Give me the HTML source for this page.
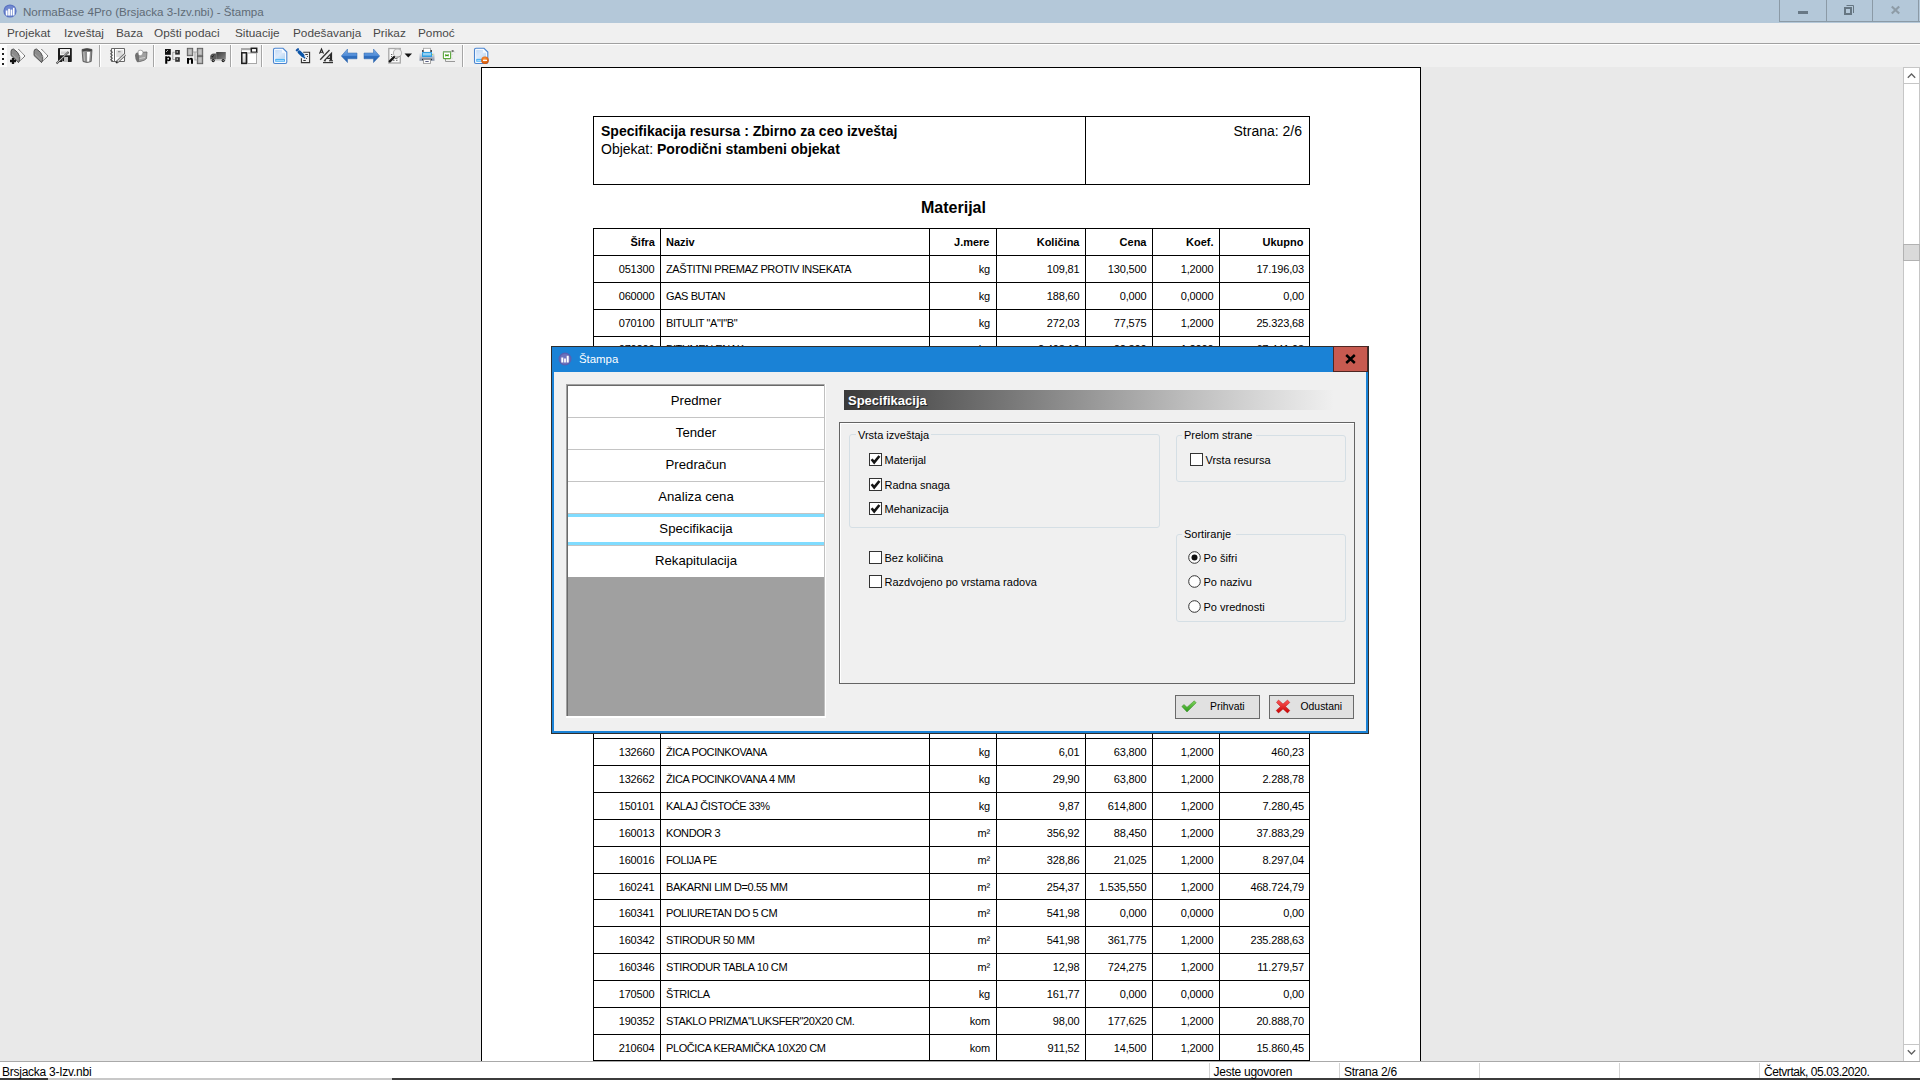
<!DOCTYPE html>
<html><head><meta charset="utf-8"><title>NormaBase 4Pro - Štampa</title>
<style>
html,body{margin:0;padding:0}
body{width:1920px;height:1080px;position:relative;overflow:hidden;background:#e9e9e9;font-family:"Liberation Sans", sans-serif}
.a{position:absolute}
.t{white-space:pre;line-height:1}
svg{overflow:visible}
</style></head><body>
<div class="a" style="left:0px;top:0px;width:1920px;height:23px;background:#b4c8d9"></div>
<svg class="a" style="left:3px;top:4px" width="15" height="15" viewBox="0 0 15 15"><circle cx="7" cy="7" r="6.6" fill="#5a73c2"/><circle cx="7" cy="7" r="5.4" fill="#7088cf"/><rect x="2.8" y="6.5" width="1.7" height="5" fill="#fff"/><rect x="5.2" y="4.8" width="1.7" height="6.7" fill="#fff"/><rect x="7.6" y="5.6" width="1.7" height="5.9" fill="#fff"/><rect x="10" y="3.8" width="1.5" height="7.7" fill="#fff"/></svg>
<div class="a t" style="left:23px;top:6.18px;font-size:11.6px;font-weight:400;color:#5f6b76;">NormaBase 4Pro (Brsjacka 3-Izv.nbi) - Štampa</div>
<div class="a" style="left:1779px;top:0px;width:141px;height:22px;background:#b4c8d9;border-left:1px solid #8b9aa6;border-bottom:1px solid #8b9aa6;box-sizing:border-box"></div>
<div class="a" style="left:1826px;top:0px;width:1px;height:22px;background:#8b9aa6"></div>
<div class="a" style="left:1872px;top:0px;width:1px;height:22px;background:#8b9aa6"></div>
<div class="a" style="left:1918px;top:0px;width:1px;height:22px;background:#8b9aa6"></div>
<div class="a" style="left:1798px;top:11px;width:10px;height:3px;background:#687885"></div>
<svg class="a" style="left:1840px;top:3px" width="16" height="14" viewBox="0 0 16 14"><rect x="5" y="5" width="6" height="6" fill="none" stroke="#667682" stroke-width="2"/><path d="M6.5 2.5 H13.5 V10" fill="none" stroke="#667682" stroke-width="1"/></svg>
<svg class="a" style="left:1891px;top:6px" width="9" height="8" viewBox="0 0 9 8"><path d="M0.8 0.5 L8.2 7.5 M8.2 0.5 L0.8 7.5" stroke="#8e9ca7" stroke-width="2.2"/></svg>
<div class="a" style="left:0px;top:23px;width:1920px;height:20px;background:#f0f0f0"></div>
<div class="a t" style="left:7px;top:27.51px;font-size:11.8px;font-weight:400;color:#484848;">Projekat</div>
<div class="a t" style="left:64px;top:27.51px;font-size:11.8px;font-weight:400;color:#484848;">Izveštaj</div>
<div class="a t" style="left:116px;top:27.51px;font-size:11.8px;font-weight:400;color:#484848;">Baza</div>
<div class="a t" style="left:154px;top:27.51px;font-size:11.8px;font-weight:400;color:#484848;">Opšti podaci</div>
<div class="a t" style="left:235px;top:27.51px;font-size:11.8px;font-weight:400;color:#484848;">Situacije</div>
<div class="a t" style="left:293px;top:27.51px;font-size:11.8px;font-weight:400;color:#484848;">Podešavanja</div>
<div class="a t" style="left:373px;top:27.51px;font-size:11.8px;font-weight:400;color:#484848;">Prikaz</div>
<div class="a t" style="left:418px;top:27.51px;font-size:11.8px;font-weight:400;color:#484848;">Pomoć</div>
<div class="a" style="left:0px;top:43px;width:1920px;height:1px;background:#a0a0a0"></div>
<div class="a" style="left:0px;top:44px;width:1920px;height:1px;background:#ffffff"></div>
<div class="a" style="left:0px;top:45px;width:1920px;height:22px;background:#f0f0f0"></div>
<div class="a" style="left:0px;top:45px;width:7px;height:22px;background:#fcfcfc"></div>
<div class="a" style="left:2px;top:48px;width:2px;height:2px;background:#222"></div>
<div class="a" style="left:2px;top:53px;width:2px;height:2px;background:#222"></div>
<div class="a" style="left:2px;top:58px;width:2px;height:2px;background:#222"></div>
<div class="a" style="left:2px;top:63px;width:2px;height:2px;background:#222"></div>
<div class="a" style="left:99px;top:45px;width:1px;height:22px;background:#a6a6a6"></div>
<div class="a" style="left:100px;top:45px;width:1px;height:22px;background:#ffffff"></div>
<div class="a" style="left:153px;top:45px;width:1px;height:22px;background:#a6a6a6"></div>
<div class="a" style="left:154px;top:45px;width:1px;height:22px;background:#ffffff"></div>
<div class="a" style="left:230px;top:45px;width:1px;height:22px;background:#a6a6a6"></div>
<div class="a" style="left:231px;top:45px;width:1px;height:22px;background:#ffffff"></div>
<div class="a" style="left:261px;top:45px;width:1px;height:22px;background:#a6a6a6"></div>
<div class="a" style="left:262px;top:45px;width:1px;height:22px;background:#ffffff"></div>
<div class="a" style="left:462px;top:45px;width:1px;height:22px;background:#a6a6a6"></div>
<div class="a" style="left:463px;top:45px;width:1px;height:22px;background:#ffffff"></div>
<svg class="a" style="left:8px;top:46px" width="20" height="20" viewBox="0 0 20 20"><path d="M5.5 3 L10.5 3 L17 10 L10.5 16.5 L3 9.5 L3 5.5 Z" fill="#fafafa"/><path d="M10.5 3.2 L17 10 L10.5 16.5" fill="none" stroke="#3c3c3c" stroke-width="1" stroke-dasharray="1 0.6"/><path d="M5.5 3 Q3 3 3 5.5 L3 9.5 L10.5 16.5 Q12.5 14 11.7 10.5 Q10.5 6 5.5 3 Z" fill="#8c8c8c" stroke="#4a4a4a" stroke-width="0.9"/><path d="M4 8 L10 13.5" stroke="#a6a6a6" stroke-width="1"/><path d="M11.7 10.5 Q13.5 12 14 12.5" stroke="#ddd" stroke-width="1"/><path d="M2 15 H8 M5 12 V18" stroke="#111" stroke-width="2.3"/></svg>
<svg class="a" style="left:31px;top:46px" width="20" height="20" viewBox="0 0 20 20"><path d="M5.5 3 L10.5 3 L17 10 L10.5 16.5 L3 9.5 L3 5.5 Z" fill="#fafafa"/><path d="M10.5 3.2 L17 10 L10.5 16.5" fill="none" stroke="#3c3c3c" stroke-width="1" stroke-dasharray="1 0.6"/><path d="M5.5 3 Q3 3 3 5.5 L3 9.5 L10.5 16.5 Q12.5 14 11.7 10.5 Q10.5 6 5.5 3 Z" fill="#8c8c8c" stroke="#4a4a4a" stroke-width="0.9"/><path d="M4 8 L10 13.5" stroke="#a6a6a6" stroke-width="1"/><path d="M11.7 10.5 Q13.5 12 14 12.5" stroke="#ddd" stroke-width="1"/></svg>
<svg class="a" style="left:54px;top:46px" width="20" height="20" viewBox="0 0 20 20"><rect x="4" y="2" width="13.8" height="14" rx="0.8" fill="#1c1c1c"/><rect x="6" y="3" width="10" height="6.3" fill="#efefef"/><rect x="7" y="5.5" width="8" height="2.5" fill="#d0d0d0"/><rect x="8" y="11" width="6" height="5" fill="#bdbdbd"/><rect x="8.4" y="12" width="1.6" height="3" fill="#111"/><path d="M2.5 17.5 L14.5 6" stroke="#444" stroke-width="1.8"/><path d="M2.8 17 L14.3 6.2" stroke="#d8d8d8" stroke-width="0.8"/></svg>
<svg class="a" style="left:78px;top:46px" width="20" height="20" viewBox="0 0 20 20"><path d="M4 3.5 Q9 1.5 14 3.5 L13.2 15.5 Q9 17.5 5 15.5 Z" fill="#8e8e8e" stroke="#505050" stroke-width="0.8"/><path d="M4.2 3.5 Q9 2 13.8 3.5 L13.6 5.5 Q9 4 4.4 5.5 Z" fill="#444"/><path d="M9 6 L12 6 L11.2 15.6 L9.2 15.8 Z" fill="#fff"/><path d="M5.8 6 L6.5 15" stroke="#b8b8b8" stroke-width="1.2"/></svg>
<svg class="a" style="left:108px;top:46px" width="20" height="20" viewBox="0 0 20 20"><rect x="3.5" y="2.5" width="13" height="13" rx="0.6" fill="#fff" stroke="#676767" stroke-width="1.1"/><path d="M6.5 2.5 V15.5" stroke="#676767" stroke-width="1"/><path d="M2 4.5 L5 6.5 M2 7.5 L5 9.5 M2 10.5 L5 12.5 M2 13.5 L5 15" stroke="#5a5a5a" stroke-width="1"/><rect x="8.2" y="4.2" width="6.6" height="7" fill="#dcdcdc"/><rect x="10" y="5.3" width="2.5" height="0.9" fill="#777"/><path d="M8.5 16.5 L17 8.5" stroke="#5c5c5c" stroke-width="3"/><path d="M8.5 16.5 L17 8.5" stroke="#e2e2e2" stroke-width="1.3"/><path d="M8 17 L9.5 15.5" stroke="#222" stroke-width="1.6"/></svg>
<svg class="a" style="left:131px;top:46px" width="20" height="20" viewBox="0 0 20 20"><path d="M7.5 6.5 L16 6 L15.5 12.5 Q14 14.5 9 15.5 L6.5 15.8 Z" fill="#a0a0a0" stroke="#666" stroke-width="0.8"/><path d="M4 9.5 Q4.5 6.5 6.5 6.5 L8 7 L8 15.8 L6 16 Q4 13 4 9.5 Z" fill="#707070"/><path d="M7 6 Q7 4 9.5 4.2 Q12 4 12 6.5 Q12 9.5 9 10 Q7 9.5 7 6 Z" fill="#fff" stroke="#8a8a8a" stroke-width="0.7"/><path d="M8.5 12.5 L14 11.5" stroke="#d0d0d0" stroke-width="1"/></svg>
<svg class="a" style="left:164px;top:48px" width="17" height="17" viewBox="0 0 17 17"><rect x="1" y="1" width="5.8" height="5.8" fill="#111"/><path d="M2 4 L4 2" stroke="#bbb" stroke-width="0.9"/><rect x="11.2" y="2" width="4.6" height="4.6" fill="#2a2a2a"/><rect x="12.6" y="3.3" width="1.3" height="1.3" fill="#ddd"/><rect x="11.2" y="9.2" width="4.6" height="4.6" fill="#333"/><rect x="12.6" y="10.4" width="1.3" height="1.3" fill="#ddd"/><path d="M10.8 4.3 H8.8 V11.5 H10.8" fill="none" stroke="#999" stroke-width="0.9"/><path d="M1.2 8.3 H3.2 V8.9 Q3.8 8.2 4.6 8.2 Q7 8.2 7 10.7 Q7 13.2 4.6 13.2 Q3.8 13.2 3.3 12.6 V15.8 H1.2 Z M3.3 10.7 Q3.3 11.7 4.2 11.7 Q5 11.7 5 10.7 Q5 9.7 4.2 9.7 Q3.3 9.7 3.3 10.7 Z" fill="#000" fill-rule="evenodd"/></svg>
<svg class="a" style="left:186px;top:47px" width="18" height="18" viewBox="0 0 18 18"><rect x="1.3" y="1.3" width="5.4" height="7.4" fill="#a2a2a2" stroke="#5a5a5a" stroke-width="0.9"/><rect x="2.5" y="2.5" width="3" height="5" fill="#c4c4c4"/><rect x="11.3" y="1.3" width="5.4" height="7.6" fill="#a2a2a2" stroke="#5a5a5a" stroke-width="0.9"/><rect x="12.5" y="2.5" width="3" height="5" fill="#c4c4c4"/><rect x="11.3" y="9.3" width="5.4" height="7.4" fill="#a2a2a2" stroke="#5a5a5a" stroke-width="0.9"/><rect x="12.5" y="10.5" width="3" height="5" fill="#c4c4c4"/><path d="M6.8 5 H9 V13 H11.3 M9 5 H11.3" fill="none" stroke="#a8a8a8" stroke-width="1.2"/><path d="M1 11 H3 V11.8 Q4 10.8 5.2 10.8 Q7 10.8 7 13 V16.8 H5 V13.5 Q5 12.6 4.2 12.6 Q3 12.6 3 13.8 V16.8 H1 Z" fill="#000"/></svg>
<svg class="a" style="left:209px;top:51px" width="18" height="12" viewBox="0 0 18 12"><defs><linearGradient id="tg" x1="0" y1="0" x2="1" y2="1"><stop offset="0" stop-color="#3a3a3a"/><stop offset="1" stop-color="#8a8a8a"/></linearGradient></defs><rect x="7.2" y="1" width="9.6" height="7.6" fill="url(#tg)"/><path d="M1.2 8.8 V5.5 Q1.5 3 4.5 2.6 L7.2 2.6 L7.2 9 Z" fill="#5c5c5c"/><path d="M2.2 5.2 Q3.2 3.4 5.6 3.3 L3.6 6.5 Z" fill="#111"/><path d="M2.8 5.2 L4.6 3.8" stroke="#aaa" stroke-width="0.6"/><rect x="1" y="8.3" width="16" height="1.4" fill="#c8c8c8"/><circle cx="4.2" cy="9.6" r="1.6" fill="#1a1a1a"/><circle cx="4.2" cy="9.6" r="0.6" fill="#bbb"/><circle cx="14.2" cy="9.6" r="1.6" fill="#1a1a1a"/><circle cx="14.2" cy="9.6" r="0.6" fill="#bbb"/></svg>
<svg class="a" style="left:240px;top:47px" width="18" height="18" viewBox="0 0 18 18"><rect x="1.5" y="1.5" width="15" height="15" fill="#fff" stroke="#a0a0a0" stroke-width="1"/><rect x="1" y="1" width="16" height="2.2" fill="#a8a8a8"/><rect x="11.3" y="1.3" width="5.4" height="4" fill="#fff" stroke="#1e1e1e" stroke-width="1.5"/><defs><linearGradient id="lg" x1="0" y1="0" x2="0" y2="1"><stop offset="0" stop-color="#fff"/><stop offset="1" stop-color="#c8c8c8"/></linearGradient></defs><rect x="1.8" y="5.8" width="4.6" height="10.6" fill="url(#lg)" stroke="#1e1e1e" stroke-width="1.5"/><rect x="7.5" y="6" width="9" height="10.5" fill="#fff" stroke="#a8a8a8" stroke-width="1"/></svg>
<svg class="a" style="left:270px;top:46px" width="20" height="20" viewBox="0 0 20 20"><defs><linearGradient id="pg1" x1="0" y1="0" x2="1" y2="1"><stop offset="0" stop-color="#c3dbf6"/><stop offset="0.5" stop-color="#dbe9fb"/><stop offset="1" stop-color="#b8d6f2"/></linearGradient></defs><path d="M5 2.3 H13 L16.8 6 V16 Q16.8 17.5 15.3 17.5 H5 Q3.5 17.5 3.5 16 V3.8 Q3.5 2.3 5 2.3 Z" fill="#f6faff" stroke="#4a84cf" stroke-width="1.1"/><path d="M5.2 4 H12 V6.8 H15 V12.5 H5.2 Z" fill="url(#pg1)"/><rect x="5.2" y="12.8" width="9.8" height="3" rx="0.4" fill="#4fb2f4"/><rect x="6.2" y="14" width="7.8" height="0.9" fill="#a9dcff"/></svg>
<svg class="a" style="left:294px;top:46px" width="20" height="20" viewBox="0 0 20 20"><path d="M9.2 6.3 H15.6 V16.6 H7.4 V12.2" fill="none" stroke="#333" stroke-width="1.1"/><path d="M11.3 8.5 H13.8 M9.3 14.5 H11.8" stroke="#333" stroke-width="1"/><circle cx="13.5" cy="10.5" r="0.6" fill="#333"/><circle cx="12.5" cy="12.5" r="0.6" fill="#333"/><path d="M2.8 4.3 L4 3.2" stroke="#1556a8" stroke-width="2.2" stroke-linecap="round"/><path d="M5.2 6 L8.8 9.5" stroke="#0b55a8" stroke-width="3.4" stroke-linecap="round"/><path d="M9.8 11 L10.6 11.8" stroke="#0b55a8" stroke-width="1.6" stroke-linecap="round"/></svg>
<svg class="a" style="left:316px;top:46px" width="20" height="20" viewBox="0 0 20 20"><path d="M3.5 7.6 L5.5 3 L7.5 7.6 M4.3 6.3 H6.7" fill="none" stroke="#222" stroke-width="1.1"/><path d="M4.2 13.8 L13.5 4" stroke="#333" stroke-width="1.3"/><path d="M8.3 14.6 L15.5 7.2 L15.5 14.6 M11.3 12.3 H15" fill="none" stroke="#2a2a2a" stroke-width="1.2"/><path d="M14.6 8.5 L14.6 14.6" stroke="#2a2a2a" stroke-width="1.6"/><path d="M7.8 14.8 H10 M13 14.8 H17" stroke="#2a2a2a" stroke-width="1"/><path d="M7 16.6 H17" stroke="#333" stroke-width="1.2"/></svg>
<svg class="a" style="left:339px;top:46px" width="20" height="20" viewBox="0 0 20 20"><defs><linearGradient id="la" x1="0" y1="0" x2="0" y2="1"><stop offset="0" stop-color="#7eaee6"/><stop offset="0.5" stop-color="#4d8ad6"/><stop offset="0.55" stop-color="#2f6fc0"/><stop offset="1" stop-color="#2660aa"/></linearGradient></defs><g><path d="M2.3 10 L8.5 3 V7 H18 V12.8 H8.5 V16.6 Z" fill="url(#la)" stroke="#2a64ae" stroke-width="0.5"/></g></svg>
<svg class="a" style="left:362px;top:46px" width="20" height="20" viewBox="0 0 20 20"><defs><linearGradient id="ra" x1="0" y1="0" x2="0" y2="1"><stop offset="0" stop-color="#7eaee6"/><stop offset="0.5" stop-color="#4d8ad6"/><stop offset="0.55" stop-color="#2f6fc0"/><stop offset="1" stop-color="#2660aa"/></linearGradient></defs><g transform="translate(20,0) scale(-1,1)"><path d="M2.3 10 L8.5 3 V7 H18 V12.8 H8.5 V16.6 Z" fill="url(#ra)" stroke="#2a64ae" stroke-width="0.5"/></g></svg>
<svg class="a" style="left:386px;top:46px" width="20" height="20" viewBox="0 0 20 20"><rect x="2.8" y="2.5" width="11.5" height="14.5" fill="#fafafa" stroke="#a8a8a8" stroke-width="1.3"/><path d="M5 8.5 H6.3 M5 10.5 H6 M9 12.4 H11.5 M7 14.3 H8.5 M10 14.3 H11.5" stroke="#555" stroke-width="0.9"/><circle cx="11.5" cy="7" r="4.1" fill="#ececec" stroke="#b8b8b8" stroke-width="1.1"/><path d="M14.5 9.8 Q13 11.4 10.5 11.3" fill="none" stroke="#888" stroke-width="0.8"/><path d="M3.8 15.3 L8 11.2" stroke="#1a1a1a" stroke-width="2.4" stroke-linecap="round"/></svg>
<svg class="a" style="left:404px;top:53px" width="9" height="5" viewBox="0 0 9 5"><path d="M0.5 0.5 H8 L4.25 4.5 Z" fill="#111"/></svg>
<svg class="a" style="left:417px;top:46px" width="20" height="20" viewBox="0 0 20 20"><defs><linearGradient id="prb" x1="0" y1="0" x2="0" y2="1"><stop offset="0" stop-color="#f2f4f8"/><stop offset="1" stop-color="#8390a6"/></linearGradient></defs><path d="M2.5 8 Q2.5 6 4.5 6 H15.5 Q17.5 6 17.5 8 V14.8 H2.5 Z" fill="url(#prb)"/><rect x="6.5" y="2.3" width="7" height="4" fill="#fff" stroke="#a8a8a8" stroke-width="0.9"/><rect x="5.2" y="4" width="1.2" height="2" fill="#1a2330"/><rect x="13.6" y="4" width="1.2" height="2" fill="#1a2330"/><rect x="5" y="6" width="10" height="5" rx="0.6" fill="#2e9ee0"/><rect x="6" y="7" width="8" height="2.5" fill="#93d0f3"/><circle cx="15.7" cy="8.5" r="0.6" fill="#b8e02a"/><rect x="5" y="12.8" width="10" height="1.4" fill="#2a3340"/><rect x="6.5" y="13.6" width="7" height="3.8" fill="#fff" stroke="#9a9a9a" stroke-width="0.9"/><rect x="8.3" y="15.1" width="3.4" height="0.9" fill="#4a5078"/></svg>
<svg class="a" style="left:440px;top:46px" width="20" height="20" viewBox="0 0 20 20"><path d="M5.5 12.8 V15.5 H15" fill="none" stroke="#999" stroke-width="1"/><rect x="3.4" y="5.6" width="7.2" height="7" rx="0.5" fill="#fff" stroke="#5aa83a" stroke-width="1.1"/><rect x="3.2" y="5.3" width="7.6" height="1.2" fill="#9ab59a"/><path d="M5.2 8 Q7 9.3 8.7 8 L8.7 10.5 Q7 9.3 5.2 10.5 Z" fill="#3a9a10"/><path d="M12 4.5 H13 Q13.6 4.5 13.6 5 Q13.6 5.5 13 5.5 H12 M12 4.3 V6.2 M14 5.6 L14.6 6.2" fill="none" stroke="#666" stroke-width="0.8"/><path d="M11.5 8.5 H12.8 M11.5 12.3 H12.8" stroke="#ccc" stroke-width="0.7"/></svg>
<svg class="a" style="left:471px;top:46px" width="20" height="20" viewBox="0 0 20 20"><defs><linearGradient id="pg2" x1="0" y1="0" x2="1" y2="1"><stop offset="0" stop-color="#c3dbf6"/><stop offset="0.5" stop-color="#dbe9fb"/><stop offset="1" stop-color="#b8d6f2"/></linearGradient></defs><path d="M5 2.3 H13 L16.8 6 V16 Q16.8 17.5 15.3 17.5 H5 Q3.5 17.5 3.5 16 V3.8 Q3.5 2.3 5 2.3 Z" fill="#f6faff" stroke="#4a84cf" stroke-width="1.1"/><path d="M5.2 4 H12 V6.8 H15 V12.5 H5.2 Z" fill="url(#pg2)"/><rect x="5.2" y="12.8" width="9.8" height="3" rx="0.4" fill="#4fb2f4"/><rect x="6.2" y="14" width="7.8" height="0.9" fill="#a9dcff"/><defs><radialGradient id="og" cx="0.45" cy="0.35" r="0.7"><stop offset="0" stop-color="#ff9a40"/><stop offset="1" stop-color="#c84800"/></radialGradient></defs><circle cx="14" cy="14.3" r="3.8" fill="url(#og)"/><rect x="12" y="13.7" width="4" height="1.3" fill="#fff"/></svg>
<div class="a" style="left:0px;top:67px;width:1903px;height:994px;background:#e9e9e9"></div>
<div class="a" style="left:481px;top:67px;width:940px;height:994px;background:#fff;border:1px solid #000;border-bottom:none;box-sizing:border-box"></div>
<div class="a" style="left:593px;top:116px;width:717px;height:69px;border:1px solid #000;box-sizing:border-box"></div>
<div class="a" style="left:1085px;top:116px;width:1px;height:69px;background:#000"></div>
<div class="a t" style="left:601px;top:124.15px;font-size:14px;font-weight:700;color:#000;">Specifikacija resursa : Zbirno za ceo izveštaj</div>
<div class="a t" style="left:601px;top:142.15px;font-size:14px;font-weight:400;color:#000;">Objekat:</div>
<div class="a t" style="left:657px;top:142.15px;font-size:14px;font-weight:700;color:#000;">Porodični stambeni objekat</div>
<div class="a t" style="left:902px;width:400px;text-align:right;top:124.15px;font-size:14px;font-weight:400;color:#000;">Strana: 2/6</div>
<div class="a t" style="left:921px;top:200.46px;font-size:16px;font-weight:700;color:#000;">Materijal</div>
<div class="a" style="left:593px;top:228px;width:1px;height:833px;background:#000"></div>
<div class="a" style="left:660px;top:228px;width:1px;height:833px;background:#000"></div>
<div class="a" style="left:929px;top:228px;width:1px;height:833px;background:#000"></div>
<div class="a" style="left:996px;top:228px;width:1px;height:833px;background:#000"></div>
<div class="a" style="left:1085px;top:228px;width:1px;height:833px;background:#000"></div>
<div class="a" style="left:1152px;top:228px;width:1px;height:833px;background:#000"></div>
<div class="a" style="left:1219px;top:228px;width:1px;height:833px;background:#000"></div>
<div class="a" style="left:1309px;top:228px;width:1px;height:833px;background:#000"></div>
<div class="a" style="left:593px;top:228px;width:717px;height:1px;background:#000"></div>
<div class="a" style="left:593px;top:255px;width:717px;height:1px;background:#000"></div>
<div class="a" style="left:593px;top:282px;width:717px;height:1px;background:#000"></div>
<div class="a" style="left:593px;top:309px;width:717px;height:1px;background:#000"></div>
<div class="a" style="left:593px;top:336px;width:717px;height:1px;background:#000"></div>
<div class="a" style="left:593px;top:363px;width:717px;height:1px;background:#000"></div>
<div class="a" style="left:593px;top:389px;width:717px;height:1px;background:#000"></div>
<div class="a" style="left:593px;top:416px;width:717px;height:1px;background:#000"></div>
<div class="a" style="left:593px;top:443px;width:717px;height:1px;background:#000"></div>
<div class="a" style="left:593px;top:470px;width:717px;height:1px;background:#000"></div>
<div class="a" style="left:593px;top:497px;width:717px;height:1px;background:#000"></div>
<div class="a" style="left:593px;top:524px;width:717px;height:1px;background:#000"></div>
<div class="a" style="left:593px;top:550px;width:717px;height:1px;background:#000"></div>
<div class="a" style="left:593px;top:577px;width:717px;height:1px;background:#000"></div>
<div class="a" style="left:593px;top:604px;width:717px;height:1px;background:#000"></div>
<div class="a" style="left:593px;top:631px;width:717px;height:1px;background:#000"></div>
<div class="a" style="left:593px;top:658px;width:717px;height:1px;background:#000"></div>
<div class="a" style="left:593px;top:685px;width:717px;height:1px;background:#000"></div>
<div class="a" style="left:593px;top:711px;width:717px;height:1px;background:#000"></div>
<div class="a" style="left:593px;top:738px;width:717px;height:1px;background:#000"></div>
<div class="a" style="left:593px;top:765px;width:717px;height:1px;background:#000"></div>
<div class="a" style="left:593px;top:792px;width:717px;height:1px;background:#000"></div>
<div class="a" style="left:593px;top:819px;width:717px;height:1px;background:#000"></div>
<div class="a" style="left:593px;top:846px;width:717px;height:1px;background:#000"></div>
<div class="a" style="left:593px;top:873px;width:717px;height:1px;background:#000"></div>
<div class="a" style="left:593px;top:899px;width:717px;height:1px;background:#000"></div>
<div class="a" style="left:593px;top:926px;width:717px;height:1px;background:#000"></div>
<div class="a" style="left:593px;top:953px;width:717px;height:1px;background:#000"></div>
<div class="a" style="left:593px;top:980px;width:717px;height:1px;background:#000"></div>
<div class="a" style="left:593px;top:1007px;width:717px;height:1px;background:#000"></div>
<div class="a" style="left:593px;top:1034px;width:717px;height:1px;background:#000"></div>
<div class="a" style="left:593px;top:1060px;width:717px;height:1px;background:#000"></div>
<div class="a t" style="left:455px;width:200px;text-align:right;top:236.69px;font-size:11px;font-weight:700;color:#000;">Šifra</div>
<div class="a t" style="left:666px;top:236.69px;font-size:11px;font-weight:700;color:#000;">Naziv</div>
<div class="a t" style="left:789.5px;width:200px;text-align:right;top:236.69px;font-size:11px;font-weight:700;color:#000;">J.mere</div>
<div class="a t" style="left:879.5px;width:200px;text-align:right;top:236.69px;font-size:11px;font-weight:700;color:#000;">Količina</div>
<div class="a t" style="left:946.5px;width:200px;text-align:right;top:236.69px;font-size:11px;font-weight:700;color:#000;">Cena</div>
<div class="a t" style="left:1013.5px;width:200px;text-align:right;top:236.69px;font-size:11px;font-weight:700;color:#000;">Koef.</div>
<div class="a t" style="left:1103.5px;width:200px;text-align:right;top:236.69px;font-size:11px;font-weight:700;color:#000;">Ukupno</div>
<div class="a t" style="left:454.5px;width:200px;text-align:right;top:263.69px;font-size:11px;font-weight:400;color:#000;letter-spacing:-0.15px;">051300</div>
<div class="a t" style="left:666px;top:263.69px;font-size:11px;font-weight:400;color:#000;letter-spacing:-0.4px;">ZAŠTITNI PREMAZ PROTIV INSEKATA</div>
<div class="a t" style="left:790px;width:200px;text-align:right;top:263.69px;font-size:11px;font-weight:400;color:#000;letter-spacing:-0.15px;">kg</div>
<div class="a t" style="left:879.5px;width:200px;text-align:right;top:263.69px;font-size:11px;font-weight:400;color:#000;letter-spacing:-0.15px;">109,81</div>
<div class="a t" style="left:946.5px;width:200px;text-align:right;top:263.69px;font-size:11px;font-weight:400;color:#000;letter-spacing:-0.15px;">130,500</div>
<div class="a t" style="left:1013.5px;width:200px;text-align:right;top:263.69px;font-size:11px;font-weight:400;color:#000;letter-spacing:-0.15px;">1,2000</div>
<div class="a t" style="left:1104px;width:200px;text-align:right;top:263.69px;font-size:11px;font-weight:400;color:#000;letter-spacing:-0.15px;">17.196,03</div>
<div class="a t" style="left:454.5px;width:200px;text-align:right;top:290.69px;font-size:11px;font-weight:400;color:#000;letter-spacing:-0.15px;">060000</div>
<div class="a t" style="left:666px;top:290.69px;font-size:11px;font-weight:400;color:#000;letter-spacing:-0.4px;">GAS BUTAN</div>
<div class="a t" style="left:790px;width:200px;text-align:right;top:290.69px;font-size:11px;font-weight:400;color:#000;letter-spacing:-0.15px;">kg</div>
<div class="a t" style="left:879.5px;width:200px;text-align:right;top:290.69px;font-size:11px;font-weight:400;color:#000;letter-spacing:-0.15px;">188,60</div>
<div class="a t" style="left:946.5px;width:200px;text-align:right;top:290.69px;font-size:11px;font-weight:400;color:#000;letter-spacing:-0.15px;">0,000</div>
<div class="a t" style="left:1013.5px;width:200px;text-align:right;top:290.69px;font-size:11px;font-weight:400;color:#000;letter-spacing:-0.15px;">0,0000</div>
<div class="a t" style="left:1104px;width:200px;text-align:right;top:290.69px;font-size:11px;font-weight:400;color:#000;letter-spacing:-0.15px;">0,00</div>
<div class="a t" style="left:454.5px;width:200px;text-align:right;top:317.69px;font-size:11px;font-weight:400;color:#000;letter-spacing:-0.15px;">070100</div>
<div class="a t" style="left:666px;top:317.69px;font-size:11px;font-weight:400;color:#000;letter-spacing:-0.4px;">BITULIT "A"I"B"</div>
<div class="a t" style="left:790px;width:200px;text-align:right;top:317.69px;font-size:11px;font-weight:400;color:#000;letter-spacing:-0.15px;">kg</div>
<div class="a t" style="left:879.5px;width:200px;text-align:right;top:317.69px;font-size:11px;font-weight:400;color:#000;letter-spacing:-0.15px;">272,03</div>
<div class="a t" style="left:946.5px;width:200px;text-align:right;top:317.69px;font-size:11px;font-weight:400;color:#000;letter-spacing:-0.15px;">77,575</div>
<div class="a t" style="left:1013.5px;width:200px;text-align:right;top:317.69px;font-size:11px;font-weight:400;color:#000;letter-spacing:-0.15px;">1,2000</div>
<div class="a t" style="left:1104px;width:200px;text-align:right;top:317.69px;font-size:11px;font-weight:400;color:#000;letter-spacing:-0.15px;">25.323,68</div>
<div class="a t" style="left:454.5px;width:200px;text-align:right;top:343.69px;font-size:11px;font-weight:400;color:#000;letter-spacing:-0.15px;">070200</div>
<div class="a t" style="left:666px;top:343.69px;font-size:11px;font-weight:400;color:#000;letter-spacing:-0.4px;">BITUMEN ENAK</div>
<div class="a t" style="left:790px;width:200px;text-align:right;top:343.69px;font-size:11px;font-weight:400;color:#000;letter-spacing:-0.15px;">kg</div>
<div class="a t" style="left:879.5px;width:200px;text-align:right;top:343.69px;font-size:11px;font-weight:400;color:#000;letter-spacing:-0.15px;">2.498,12</div>
<div class="a t" style="left:946.5px;width:200px;text-align:right;top:343.69px;font-size:11px;font-weight:400;color:#000;letter-spacing:-0.15px;">22,300</div>
<div class="a t" style="left:1013.5px;width:200px;text-align:right;top:343.69px;font-size:11px;font-weight:400;color:#000;letter-spacing:-0.15px;">1,2000</div>
<div class="a t" style="left:1104px;width:200px;text-align:right;top:343.69px;font-size:11px;font-weight:400;color:#000;letter-spacing:-0.15px;">67.441,93</div>
<div class="a t" style="left:454.5px;width:200px;text-align:right;top:746.69px;font-size:11px;font-weight:400;color:#000;letter-spacing:-0.15px;">132660</div>
<div class="a t" style="left:666px;top:746.69px;font-size:11px;font-weight:400;color:#000;letter-spacing:-0.4px;">ŽICA POCINKOVANA</div>
<div class="a t" style="left:790px;width:200px;text-align:right;top:746.69px;font-size:11px;font-weight:400;color:#000;letter-spacing:-0.15px;">kg</div>
<div class="a t" style="left:879.5px;width:200px;text-align:right;top:746.69px;font-size:11px;font-weight:400;color:#000;letter-spacing:-0.15px;">6,01</div>
<div class="a t" style="left:946.5px;width:200px;text-align:right;top:746.69px;font-size:11px;font-weight:400;color:#000;letter-spacing:-0.15px;">63,800</div>
<div class="a t" style="left:1013.5px;width:200px;text-align:right;top:746.69px;font-size:11px;font-weight:400;color:#000;letter-spacing:-0.15px;">1,2000</div>
<div class="a t" style="left:1104px;width:200px;text-align:right;top:746.69px;font-size:11px;font-weight:400;color:#000;letter-spacing:-0.15px;">460,23</div>
<div class="a t" style="left:454.5px;width:200px;text-align:right;top:773.69px;font-size:11px;font-weight:400;color:#000;letter-spacing:-0.15px;">132662</div>
<div class="a t" style="left:666px;top:773.69px;font-size:11px;font-weight:400;color:#000;letter-spacing:-0.4px;">ŽICA POCINKOVANA 4 MM</div>
<div class="a t" style="left:790px;width:200px;text-align:right;top:773.69px;font-size:11px;font-weight:400;color:#000;letter-spacing:-0.15px;">kg</div>
<div class="a t" style="left:879.5px;width:200px;text-align:right;top:773.69px;font-size:11px;font-weight:400;color:#000;letter-spacing:-0.15px;">29,90</div>
<div class="a t" style="left:946.5px;width:200px;text-align:right;top:773.69px;font-size:11px;font-weight:400;color:#000;letter-spacing:-0.15px;">63,800</div>
<div class="a t" style="left:1013.5px;width:200px;text-align:right;top:773.69px;font-size:11px;font-weight:400;color:#000;letter-spacing:-0.15px;">1,2000</div>
<div class="a t" style="left:1104px;width:200px;text-align:right;top:773.69px;font-size:11px;font-weight:400;color:#000;letter-spacing:-0.15px;">2.288,78</div>
<div class="a t" style="left:454.5px;width:200px;text-align:right;top:800.69px;font-size:11px;font-weight:400;color:#000;letter-spacing:-0.15px;">150101</div>
<div class="a t" style="left:666px;top:800.69px;font-size:11px;font-weight:400;color:#000;letter-spacing:-0.4px;">KALAJ ČISTOĆE 33%</div>
<div class="a t" style="left:790px;width:200px;text-align:right;top:800.69px;font-size:11px;font-weight:400;color:#000;letter-spacing:-0.15px;">kg</div>
<div class="a t" style="left:879.5px;width:200px;text-align:right;top:800.69px;font-size:11px;font-weight:400;color:#000;letter-spacing:-0.15px;">9,87</div>
<div class="a t" style="left:946.5px;width:200px;text-align:right;top:800.69px;font-size:11px;font-weight:400;color:#000;letter-spacing:-0.15px;">614,800</div>
<div class="a t" style="left:1013.5px;width:200px;text-align:right;top:800.69px;font-size:11px;font-weight:400;color:#000;letter-spacing:-0.15px;">1,2000</div>
<div class="a t" style="left:1104px;width:200px;text-align:right;top:800.69px;font-size:11px;font-weight:400;color:#000;letter-spacing:-0.15px;">7.280,45</div>
<div class="a t" style="left:454.5px;width:200px;text-align:right;top:827.69px;font-size:11px;font-weight:400;color:#000;letter-spacing:-0.15px;">160013</div>
<div class="a t" style="left:666px;top:827.69px;font-size:11px;font-weight:400;color:#000;letter-spacing:-0.4px;">KONDOR 3</div>
<div class="a t" style="left:790px;width:200px;text-align:right;top:827.69px;font-size:11px;font-weight:400;color:#000;letter-spacing:-0.15px;">m²</div>
<div class="a t" style="left:879.5px;width:200px;text-align:right;top:827.69px;font-size:11px;font-weight:400;color:#000;letter-spacing:-0.15px;">356,92</div>
<div class="a t" style="left:946.5px;width:200px;text-align:right;top:827.69px;font-size:11px;font-weight:400;color:#000;letter-spacing:-0.15px;">88,450</div>
<div class="a t" style="left:1013.5px;width:200px;text-align:right;top:827.69px;font-size:11px;font-weight:400;color:#000;letter-spacing:-0.15px;">1,2000</div>
<div class="a t" style="left:1104px;width:200px;text-align:right;top:827.69px;font-size:11px;font-weight:400;color:#000;letter-spacing:-0.15px;">37.883,29</div>
<div class="a t" style="left:454.5px;width:200px;text-align:right;top:854.69px;font-size:11px;font-weight:400;color:#000;letter-spacing:-0.15px;">160016</div>
<div class="a t" style="left:666px;top:854.69px;font-size:11px;font-weight:400;color:#000;letter-spacing:-0.4px;">FOLIJA PE</div>
<div class="a t" style="left:790px;width:200px;text-align:right;top:854.69px;font-size:11px;font-weight:400;color:#000;letter-spacing:-0.15px;">m²</div>
<div class="a t" style="left:879.5px;width:200px;text-align:right;top:854.69px;font-size:11px;font-weight:400;color:#000;letter-spacing:-0.15px;">328,86</div>
<div class="a t" style="left:946.5px;width:200px;text-align:right;top:854.69px;font-size:11px;font-weight:400;color:#000;letter-spacing:-0.15px;">21,025</div>
<div class="a t" style="left:1013.5px;width:200px;text-align:right;top:854.69px;font-size:11px;font-weight:400;color:#000;letter-spacing:-0.15px;">1,2000</div>
<div class="a t" style="left:1104px;width:200px;text-align:right;top:854.69px;font-size:11px;font-weight:400;color:#000;letter-spacing:-0.15px;">8.297,04</div>
<div class="a t" style="left:454.5px;width:200px;text-align:right;top:881.69px;font-size:11px;font-weight:400;color:#000;letter-spacing:-0.15px;">160241</div>
<div class="a t" style="left:666px;top:881.69px;font-size:11px;font-weight:400;color:#000;letter-spacing:-0.4px;">BAKARNI LIM D=0.55 MM</div>
<div class="a t" style="left:790px;width:200px;text-align:right;top:881.69px;font-size:11px;font-weight:400;color:#000;letter-spacing:-0.15px;">m²</div>
<div class="a t" style="left:879.5px;width:200px;text-align:right;top:881.69px;font-size:11px;font-weight:400;color:#000;letter-spacing:-0.15px;">254,37</div>
<div class="a t" style="left:946.5px;width:200px;text-align:right;top:881.69px;font-size:11px;font-weight:400;color:#000;letter-spacing:-0.15px;">1.535,550</div>
<div class="a t" style="left:1013.5px;width:200px;text-align:right;top:881.69px;font-size:11px;font-weight:400;color:#000;letter-spacing:-0.15px;">1,2000</div>
<div class="a t" style="left:1104px;width:200px;text-align:right;top:881.69px;font-size:11px;font-weight:400;color:#000;letter-spacing:-0.15px;">468.724,79</div>
<div class="a t" style="left:454.5px;width:200px;text-align:right;top:907.69px;font-size:11px;font-weight:400;color:#000;letter-spacing:-0.15px;">160341</div>
<div class="a t" style="left:666px;top:907.69px;font-size:11px;font-weight:400;color:#000;letter-spacing:-0.4px;">POLIURETAN DO 5 CM</div>
<div class="a t" style="left:790px;width:200px;text-align:right;top:907.69px;font-size:11px;font-weight:400;color:#000;letter-spacing:-0.15px;">m²</div>
<div class="a t" style="left:879.5px;width:200px;text-align:right;top:907.69px;font-size:11px;font-weight:400;color:#000;letter-spacing:-0.15px;">541,98</div>
<div class="a t" style="left:946.5px;width:200px;text-align:right;top:907.69px;font-size:11px;font-weight:400;color:#000;letter-spacing:-0.15px;">0,000</div>
<div class="a t" style="left:1013.5px;width:200px;text-align:right;top:907.69px;font-size:11px;font-weight:400;color:#000;letter-spacing:-0.15px;">0,0000</div>
<div class="a t" style="left:1104px;width:200px;text-align:right;top:907.69px;font-size:11px;font-weight:400;color:#000;letter-spacing:-0.15px;">0,00</div>
<div class="a t" style="left:454.5px;width:200px;text-align:right;top:934.69px;font-size:11px;font-weight:400;color:#000;letter-spacing:-0.15px;">160342</div>
<div class="a t" style="left:666px;top:934.69px;font-size:11px;font-weight:400;color:#000;letter-spacing:-0.4px;">STIRODUR 50 MM</div>
<div class="a t" style="left:790px;width:200px;text-align:right;top:934.69px;font-size:11px;font-weight:400;color:#000;letter-spacing:-0.15px;">m²</div>
<div class="a t" style="left:879.5px;width:200px;text-align:right;top:934.69px;font-size:11px;font-weight:400;color:#000;letter-spacing:-0.15px;">541,98</div>
<div class="a t" style="left:946.5px;width:200px;text-align:right;top:934.69px;font-size:11px;font-weight:400;color:#000;letter-spacing:-0.15px;">361,775</div>
<div class="a t" style="left:1013.5px;width:200px;text-align:right;top:934.69px;font-size:11px;font-weight:400;color:#000;letter-spacing:-0.15px;">1,2000</div>
<div class="a t" style="left:1104px;width:200px;text-align:right;top:934.69px;font-size:11px;font-weight:400;color:#000;letter-spacing:-0.15px;">235.288,63</div>
<div class="a t" style="left:454.5px;width:200px;text-align:right;top:961.69px;font-size:11px;font-weight:400;color:#000;letter-spacing:-0.15px;">160346</div>
<div class="a t" style="left:666px;top:961.69px;font-size:11px;font-weight:400;color:#000;letter-spacing:-0.4px;">STIRODUR TABLA 10 CM</div>
<div class="a t" style="left:790px;width:200px;text-align:right;top:961.69px;font-size:11px;font-weight:400;color:#000;letter-spacing:-0.15px;">m²</div>
<div class="a t" style="left:879.5px;width:200px;text-align:right;top:961.69px;font-size:11px;font-weight:400;color:#000;letter-spacing:-0.15px;">12,98</div>
<div class="a t" style="left:946.5px;width:200px;text-align:right;top:961.69px;font-size:11px;font-weight:400;color:#000;letter-spacing:-0.15px;">724,275</div>
<div class="a t" style="left:1013.5px;width:200px;text-align:right;top:961.69px;font-size:11px;font-weight:400;color:#000;letter-spacing:-0.15px;">1,2000</div>
<div class="a t" style="left:1104px;width:200px;text-align:right;top:961.69px;font-size:11px;font-weight:400;color:#000;letter-spacing:-0.15px;">11.279,57</div>
<div class="a t" style="left:454.5px;width:200px;text-align:right;top:988.69px;font-size:11px;font-weight:400;color:#000;letter-spacing:-0.15px;">170500</div>
<div class="a t" style="left:666px;top:988.69px;font-size:11px;font-weight:400;color:#000;letter-spacing:-0.4px;">ŠTRICLA</div>
<div class="a t" style="left:790px;width:200px;text-align:right;top:988.69px;font-size:11px;font-weight:400;color:#000;letter-spacing:-0.15px;">kg</div>
<div class="a t" style="left:879.5px;width:200px;text-align:right;top:988.69px;font-size:11px;font-weight:400;color:#000;letter-spacing:-0.15px;">161,77</div>
<div class="a t" style="left:946.5px;width:200px;text-align:right;top:988.69px;font-size:11px;font-weight:400;color:#000;letter-spacing:-0.15px;">0,000</div>
<div class="a t" style="left:1013.5px;width:200px;text-align:right;top:988.69px;font-size:11px;font-weight:400;color:#000;letter-spacing:-0.15px;">0,0000</div>
<div class="a t" style="left:1104px;width:200px;text-align:right;top:988.69px;font-size:11px;font-weight:400;color:#000;letter-spacing:-0.15px;">0,00</div>
<div class="a t" style="left:454.5px;width:200px;text-align:right;top:1015.69px;font-size:11px;font-weight:400;color:#000;letter-spacing:-0.15px;">190352</div>
<div class="a t" style="left:666px;top:1015.69px;font-size:11px;font-weight:400;color:#000;letter-spacing:-0.4px;">STAKLO PRIZMA"LUKSFER"20X20 CM.</div>
<div class="a t" style="left:790px;width:200px;text-align:right;top:1015.69px;font-size:11px;font-weight:400;color:#000;letter-spacing:-0.15px;">kom</div>
<div class="a t" style="left:879.5px;width:200px;text-align:right;top:1015.69px;font-size:11px;font-weight:400;color:#000;letter-spacing:-0.15px;">98,00</div>
<div class="a t" style="left:946.5px;width:200px;text-align:right;top:1015.69px;font-size:11px;font-weight:400;color:#000;letter-spacing:-0.15px;">177,625</div>
<div class="a t" style="left:1013.5px;width:200px;text-align:right;top:1015.69px;font-size:11px;font-weight:400;color:#000;letter-spacing:-0.15px;">1,2000</div>
<div class="a t" style="left:1104px;width:200px;text-align:right;top:1015.69px;font-size:11px;font-weight:400;color:#000;letter-spacing:-0.15px;">20.888,70</div>
<div class="a t" style="left:454.5px;width:200px;text-align:right;top:1042.69px;font-size:11px;font-weight:400;color:#000;letter-spacing:-0.15px;">210604</div>
<div class="a t" style="left:666px;top:1042.69px;font-size:11px;font-weight:400;color:#000;letter-spacing:-0.4px;">PLOČICA KERAMIČKA 10X20 CM</div>
<div class="a t" style="left:790px;width:200px;text-align:right;top:1042.69px;font-size:11px;font-weight:400;color:#000;letter-spacing:-0.15px;">kom</div>
<div class="a t" style="left:879.5px;width:200px;text-align:right;top:1042.69px;font-size:11px;font-weight:400;color:#000;letter-spacing:-0.15px;">911,52</div>
<div class="a t" style="left:946.5px;width:200px;text-align:right;top:1042.69px;font-size:11px;font-weight:400;color:#000;letter-spacing:-0.15px;">14,500</div>
<div class="a t" style="left:1013.5px;width:200px;text-align:right;top:1042.69px;font-size:11px;font-weight:400;color:#000;letter-spacing:-0.15px;">1,2000</div>
<div class="a t" style="left:1104px;width:200px;text-align:right;top:1042.69px;font-size:11px;font-weight:400;color:#000;letter-spacing:-0.15px;">15.860,45</div>
<div class="a" style="left:1903px;top:67px;width:17px;height:994px;background:#fff;border-left:1px solid #c6c6c6;border-right:1px solid #c6c6c6;box-sizing:border-box"></div>
<div class="a" style="left:1903px;top:67px;width:17px;height:1px;background:#c6c6c6"></div>
<div class="a" style="left:1903px;top:83px;width:17px;height:1px;background:#c6c6c6"></div>
<div class="a" style="left:1903px;top:1044px;width:17px;height:1px;background:#c6c6c6"></div>
<div class="a" style="left:1903px;top:244px;width:17px;height:17px;background:#dadada;border:1px solid #b2b2b2;box-sizing:border-box"></div>
<svg class="a" style="left:1907px;top:72px" width="9" height="7" viewBox="0 0 9 7"><path d="M0.8 5.8 L4.5 2 L8.2 5.8" fill="none" stroke="#606060" stroke-width="1.3"/></svg>
<svg class="a" style="left:1907px;top:1049px" width="9" height="7" viewBox="0 0 9 7"><path d="M0.8 1.2 L4.5 5 L8.2 1.2" fill="none" stroke="#606060" stroke-width="1.3"/></svg>
<div class="a" style="left:0px;top:1061px;width:1920px;height:1px;background:#a9a9a9"></div>
<div class="a" style="left:0px;top:1062px;width:1920px;height:16px;background:#fff"></div>
<div class="a" style="left:1209px;top:1063px;width:1px;height:15px;background:#d4d4d4"></div>
<div class="a" style="left:1339px;top:1063px;width:1px;height:15px;background:#d4d4d4"></div>
<div class="a" style="left:1479px;top:1063px;width:1px;height:15px;background:#d4d4d4"></div>
<div class="a" style="left:1619px;top:1063px;width:1px;height:15px;background:#d4d4d4"></div>
<div class="a" style="left:1759px;top:1063px;width:1px;height:15px;background:#d4d4d4"></div>
<div class="a" style="left:0px;top:1078px;width:1920px;height:2px;background:#3c3c3c"></div>
<div class="a" style="left:48px;top:1078px;width:344px;height:2px;background:#c8c8c8"></div>
<div class="a t" style="left:2px;top:1065.84px;font-size:12px;font-weight:400;color:#000;letter-spacing:-0.25px;">Brsjacka 3-Izv.nbi</div>
<div class="a t" style="left:1213.5px;top:1065.84px;font-size:12px;font-weight:400;color:#000;letter-spacing:-0.25px;">Jeste ugovoren</div>
<div class="a t" style="left:1344px;top:1065.84px;font-size:12px;font-weight:400;color:#000;letter-spacing:-0.25px;">Strana 2/6</div>
<div class="a t" style="left:1764px;top:1065.84px;font-size:12px;font-weight:400;color:#000;letter-spacing:-0.45px;">Četvrtak, 05.03.2020.</div>
<div class="a" style="left:551px;top:346px;width:818px;height:388px;background:#2e2e2e"></div>
<div class="a" style="left:552px;top:347px;width:816px;height:386px;background:#1a82d6"></div>
<div class="a" style="left:554px;top:372px;width:812px;height:359px;background:#f0f0f0"></div>
<svg class="a" style="left:558px;top:352px" width="14" height="14" viewBox="0 0 14 14"><circle cx="7" cy="7" r="6.5" fill="#5a60b0"/><circle cx="7" cy="7" r="5.2" fill="#6d72bc"/><rect x="3.3" y="5.5" width="2" height="5" fill="#fff"/><rect x="6.1" y="6.5" width="1.8" height="4" fill="#fff"/><rect x="8.7" y="3.8" width="2" height="6.7" fill="#fff"/></svg>
<div class="a t" style="left:579px;top:354.35px;font-size:11.4px;font-weight:400;color:#fff;">Štampa</div>
<div class="a" style="left:1333px;top:346px;width:35px;height:26px;background:#c75a50;border:1px solid #4e2622;box-sizing:border-box"></div>
<svg class="a" style="left:1345px;top:354px" width="11" height="10" viewBox="0 0 11 10"><path d="M1.2 1 L9.8 9 M9.8 1 L1.2 9" stroke="#000" stroke-width="2.4"/></svg>
<div class="a" style="left:566px;top:384px;width:260px;height:334px;background:#a0a0a0"></div>
<div class="a" style="left:566px;top:384px;width:260px;height:2px;background:#696969"></div>
<div class="a" style="left:566px;top:384px;width:2px;height:334px;background:#696969"></div>
<div class="a" style="left:566px;top:384px;width:1px;height:334px;background:#a0a0a0"></div>
<div class="a" style="left:566px;top:384px;width:260px;height:1px;background:#a0a0a0"></div>
<div class="a" style="left:824px;top:384px;width:1px;height:334px;background:#c0c0c0"></div>
<div class="a" style="left:825px;top:384px;width:1px;height:334px;background:#fff"></div>
<div class="a" style="left:566px;top:716px;width:260px;height:2px;background:#fff"></div>
<div class="a" style="left:568px;top:386px;width:256px;height:31px;background:#fff"></div>
<div class="a" style="left:568px;top:417px;width:256px;height:1px;background:#c4c4c4"></div>
<div class="a t" style="left:576.0px;width:240px;text-align:center;top:393.83px;font-size:13.2px;font-weight:400;color:#000;">Predmer</div>
<div class="a" style="left:568px;top:418px;width:256px;height:31px;background:#fff"></div>
<div class="a" style="left:568px;top:449px;width:256px;height:1px;background:#c4c4c4"></div>
<div class="a t" style="left:576.0px;width:240px;text-align:center;top:425.83px;font-size:13.2px;font-weight:400;color:#000;">Tender</div>
<div class="a" style="left:568px;top:450px;width:256px;height:31px;background:#fff"></div>
<div class="a" style="left:568px;top:481px;width:256px;height:1px;background:#c4c4c4"></div>
<div class="a t" style="left:576.0px;width:240px;text-align:center;top:457.83px;font-size:13.2px;font-weight:400;color:#000;">Predračun</div>
<div class="a" style="left:568px;top:482px;width:256px;height:31px;background:#fff"></div>
<div class="a" style="left:568px;top:513px;width:256px;height:1px;background:#c4c4c4"></div>
<div class="a t" style="left:576.0px;width:240px;text-align:center;top:489.83px;font-size:13.2px;font-weight:400;color:#000;">Analiza cena</div>
<div class="a" style="left:568px;top:514px;width:256px;height:31px;background:#fff"></div>
<div class="a" style="left:568px;top:545px;width:256px;height:1px;background:#c4c4c4"></div>
<div class="a t" style="left:576.0px;width:240px;text-align:center;top:521.83px;font-size:13.2px;font-weight:400;color:#000;">Specifikacija</div>
<div class="a" style="left:568px;top:546px;width:256px;height:31px;background:#fff"></div>
<div class="a" style="left:568px;top:577px;width:256px;height:1px;background:#c4c4c4"></div>
<div class="a t" style="left:576.0px;width:240px;text-align:center;top:553.83px;font-size:13.2px;font-weight:400;color:#000;">Rekapitulacija</div>
<div class="a" style="left:568px;top:514px;width:256px;height:3px;background:#80dcff"></div>
<div class="a" style="left:568px;top:542px;width:256px;height:3px;background:#80dcff"></div>
<div class="a" style="left:568px;top:577px;width:256px;height:139px;background:#a0a0a0"></div>
<div class="a" style="left:844px;top:390px;width:490px;height:20px;background:linear-gradient(to right,#3a3a3a 0%,#7a7a7a 35%,#bdbdbd 70%,#f0f0f0 100%)"></div>
<div class="a t" style="left:848px;top:394.00px;font-size:13px;font-weight:700;color:#fff;text-shadow:1px 1px 0 #222">Specifikacija</div>
<div class="a" style="left:839px;top:422px;width:516px;height:262px;border:1px solid #646464;box-sizing:border-box"></div>
<div class="a" style="left:840px;top:423px;width:514px;height:260px;border-top:1px solid #fff;border-left:1px solid #fff;box-sizing:border-box"></div>
<div class="a" style="left:849px;top:434px;width:311px;height:94px;border:1px solid #d5dfe5;border-radius:3px;box-sizing:border-box"></div>
<div class="a" style="left:856px;top:428px;width:75px;height:12px;background:#f0f0f0"></div>
<div class="a t" style="left:858px;top:429.69px;font-size:11px;font-weight:400;color:#000;">Vrsta izveštaja</div>
<div class="a" style="left:1176px;top:435px;width:170px;height:47px;border:1px solid #d5dfe5;border-radius:3px;box-sizing:border-box"></div>
<div class="a" style="left:1182px;top:429px;width:74px;height:12px;background:#f0f0f0"></div>
<div class="a t" style="left:1184px;top:430.19px;font-size:11px;font-weight:400;color:#000;">Prelom strane</div>
<div class="a" style="left:1176px;top:534px;width:170px;height:88px;border:1px solid #d5dfe5;border-radius:3px;box-sizing:border-box"></div>
<div class="a" style="left:1182px;top:528px;width:54px;height:12px;background:#f0f0f0"></div>
<div class="a t" style="left:1184px;top:529.19px;font-size:11px;font-weight:400;color:#000;">Sortiranje</div>
<div class="a" style="left:869px;top:453px;width:13px;height:13px;background:#fff;border:1px solid #333;box-sizing:border-box"></div>
<svg class="a" style="left:869px;top:453px" width="13" height="13" viewBox="0 0 13 13"><path d="M2.6 6.2 L5.2 9.4 L10.4 3" fill="none" stroke="#151515" stroke-width="2.6"/></svg>
<div class="a t" style="left:884.5px;top:454.69px;font-size:11px;font-weight:400;color:#000;">Materijal</div>
<div class="a" style="left:869px;top:478px;width:13px;height:13px;background:#fff;border:1px solid #333;box-sizing:border-box"></div>
<svg class="a" style="left:869px;top:478px" width="13" height="13" viewBox="0 0 13 13"><path d="M2.6 6.2 L5.2 9.4 L10.4 3" fill="none" stroke="#151515" stroke-width="2.6"/></svg>
<div class="a t" style="left:884.5px;top:479.69px;font-size:11px;font-weight:400;color:#000;">Radna snaga</div>
<div class="a" style="left:869px;top:502px;width:13px;height:13px;background:#fff;border:1px solid #333;box-sizing:border-box"></div>
<svg class="a" style="left:869px;top:502px" width="13" height="13" viewBox="0 0 13 13"><path d="M2.6 6.2 L5.2 9.4 L10.4 3" fill="none" stroke="#151515" stroke-width="2.6"/></svg>
<div class="a t" style="left:884.5px;top:503.69px;font-size:11px;font-weight:400;color:#000;">Mehanizacija</div>
<div class="a" style="left:869px;top:551px;width:13px;height:13px;background:#fff;border:1px solid #333;box-sizing:border-box"></div>
<div class="a t" style="left:884.5px;top:552.69px;font-size:11px;font-weight:400;color:#000;">Bez količina</div>
<div class="a" style="left:869px;top:575px;width:13px;height:13px;background:#fff;border:1px solid #333;box-sizing:border-box"></div>
<div class="a t" style="left:884.5px;top:576.69px;font-size:11px;font-weight:400;color:#000;">Razdvojeno po vrstama radova</div>
<div class="a" style="left:1190px;top:453px;width:13px;height:13px;background:#fff;border:1px solid #333;box-sizing:border-box"></div>
<div class="a t" style="left:1205.5px;top:454.69px;font-size:11px;font-weight:400;color:#000;">Vrsta resursa</div>
<svg class="a" style="left:1188px;top:550.5px" width="13" height="13" viewBox="0 0 13 13"><circle cx="6.5" cy="6.5" r="5.8" fill="#fff" stroke="#333" stroke-width="1"/><circle cx="6.5" cy="6.5" r="3" fill="#111"/></svg>
<div class="a t" style="left:1203.5px;top:552.89px;font-size:11px;font-weight:400;color:#000;">Po šifri</div>
<svg class="a" style="left:1188px;top:574.5px" width="13" height="13" viewBox="0 0 13 13"><circle cx="6.5" cy="6.5" r="5.8" fill="#fff" stroke="#333" stroke-width="1"/></svg>
<div class="a t" style="left:1203.5px;top:576.89px;font-size:11px;font-weight:400;color:#000;">Po nazivu</div>
<svg class="a" style="left:1188px;top:599.5px" width="13" height="13" viewBox="0 0 13 13"><circle cx="6.5" cy="6.5" r="5.8" fill="#fff" stroke="#333" stroke-width="1"/></svg>
<div class="a t" style="left:1203.5px;top:601.89px;font-size:11px;font-weight:400;color:#000;">Po vrednosti</div>
<div class="a" style="left:1175px;top:695px;width:85px;height:24px;background:#e1e1e1;border:1px solid #6a6a6a;box-sizing:border-box"></div>
<div class="a" style="left:1269px;top:695px;width:85px;height:24px;background:#e1e1e1;border:1px solid #6a6a6a;box-sizing:border-box"></div>
<svg class="a" style="left:1181px;top:700px" width="16" height="13" viewBox="0 0 16 13"><defs><linearGradient id="gg" x1="0" y1="0" x2="0" y2="1"><stop offset="0" stop-color="#7fd35a"/><stop offset="1" stop-color="#2a9a1a"/></linearGradient></defs><path d="M0.8 6.5 L3 4.5 L6 7.3 L13.3 0.8 L15.2 2.8 L6 12 Z" fill="url(#gg)" stroke="#3a8a2a" stroke-width="0.5"/></svg>
<div class="a t" style="left:1210px;top:702.20px;font-size:10.4px;font-weight:400;color:#000;">Prihvati</div>
<svg class="a" style="left:1275px;top:699px" width="16" height="15" viewBox="0 0 16 15"><defs><linearGradient id="rg" x1="0" y1="0" x2="0" y2="1"><stop offset="0" stop-color="#ff5a5a"/><stop offset="1" stop-color="#c80000"/></linearGradient></defs><path d="M1.5 3.5 L3.5 1 L8 5 L12.5 1 L14.8 3.5 L10.5 7.5 L14.8 11.5 L12.5 14 L8 10 L3.5 14 L1.2 11.5 L5.5 7.5 Z" fill="url(#rg)" stroke="#a00" stroke-width="0.4"/></svg>
<div class="a t" style="left:1300.5px;top:702.20px;font-size:10.4px;font-weight:400;color:#000;">Odustani</div>
</body></html>
